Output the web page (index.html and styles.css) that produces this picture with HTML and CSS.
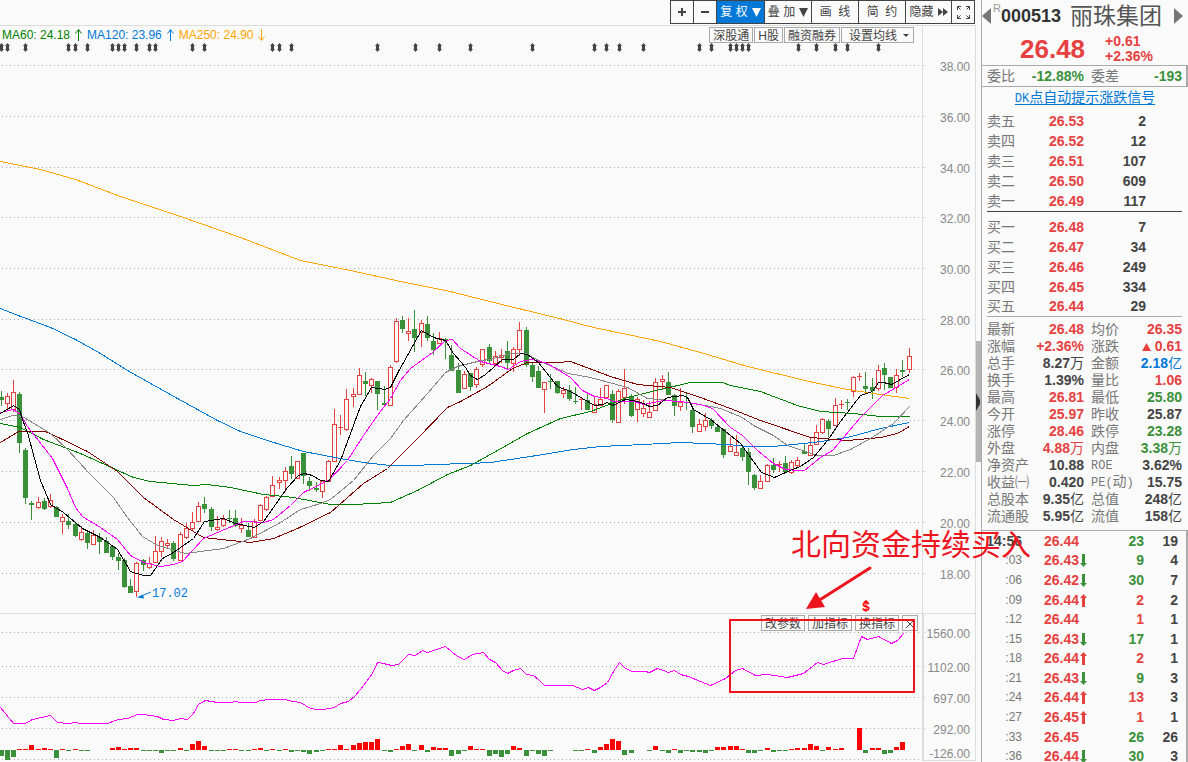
FILE: index.html
```html
<!DOCTYPE html>
<html lang="zh-CN">
<head>
<meta charset="utf-8">
<title>丽珠集团 000513</title>
<link rel="stylesheet" href="styles.css">
</head>
<body>
<main class="workspace">
  <nav class="toolbar">
    <button class="tool tool-sq" type="button" aria-label="放大"><svg width="8" height="8"><path d="M4 0v8M0 4h8" stroke="currentColor" stroke-width="2"/></svg></button>
    <button class="tool tool-sq" type="button" aria-label="缩小"><svg width="8" height="8"><path d="M0 4h8" stroke="currentColor" stroke-width="2"/></svg></button>
    <button class="tool tool-wide tool-active" type="button">复 权<svg width="9" height="9"><path d="M0 0h9l-4.500 9z" fill="currentColor"/></svg></button>
    <button class="tool" type="button">叠 加<svg width="9" height="9"><path d="M0 0h9l-4.500 9z" fill="currentColor"/></svg></button>
    <button class="tool" type="button">画&nbsp; 线</button>
    <button class="tool" type="button">简&nbsp; 约</button>
    <button class="tool tool-slim" type="button">隐藏<svg width="10" height="8"><path d="M0 0l5 4-5 4zM5 0l5 4-5 4z" fill="currentColor"/></svg></button>
    <button class="tool tool-sq" type="button" aria-label="全屏"><svg width="13" height="13" fill="none" stroke="currentColor"><path d="M.5 4V.5H4M.5.5l3 3M9 .5h3.500V4M12.500.5l-3 3M.5 9v3.500H4M.5 12.500l3-3M9 12.500h3.500V9M12.500 12.500l-3-3"/></svg></button>
  </nav>
  <section class="chart">
    <svg class="canvas" id="chart" viewBox="0 25 976 737" preserveAspectRatio="xMidYMin meet"></svg>
    <div class="legend">
      <span class="ma60">MA60: 24.18</span><svg class="ma60" width="7" height="12"><path d="M3.500 12V1M.5 4.500l3-4 3 4" fill="none" stroke="currentColor"/></svg>
      <span class="ma120">MA120: 23.96</span><svg class="ma120" width="7" height="12"><path d="M3.500 12V1M.5 4.500l3-4 3 4" fill="none" stroke="currentColor"/></svg>
      <span class="ma250">MA250: 24.90</span><svg class="ma250" width="7" height="12"><path d="M3.500 0v11M.5 7.500l3 4 3-4" fill="none" stroke="currentColor"/></svg>
    </div>
    <div class="tags">
      <button class="tag" type="button">深股通</button>
      <button class="tag" type="button">H股</button>
      <button class="tag" type="button">融资融券</button>
      <button class="tag tag-menu" type="button">设置均线<svg width="6" height="3"><path d="M0 0h6l-3 3z" fill="currentColor"/></svg></button>
    </div>
    <div class="indicators">
      <button class="tag" type="button">改参数</button>
      <button class="tag" type="button">加指标</button>
      <button class="tag" type="button">换指标</button>
      <button class="tag" type="button" aria-label="关闭"><svg width="8" height="8"><path d="M0 0l8 8M8 0l-8 8" stroke="currentColor"/></svg></button>
    </div>
    <svg class="canvas notes" viewBox="0 25 976 737" preserveAspectRatio="xMidYMin meet">
      <rect x="730" y="620" width="184" height="72" fill="none" stroke="#ed141e" stroke-width="2"/>
      <path d="M870 568L818 601" stroke="#ed141e" stroke-width="3" stroke-linecap="round"/>
      <path d="M806 609l10-17 9 15z" fill="#ed141e"/>
      <text class="note-text" x="791" y="555">北向资金持续买入</text>
    </svg>
  </section>
</main>
<div class="splitter"><span class="thumb"><svg width="4" height="18"><path d="M0 0v18l4-7V7z" fill="#333"/></svg></span></div>
<aside class="quote">
  <header class="head">
    <div class="title">
      <button class="step" type="button" aria-label="上一只"><svg width="9" height="16"><path d="M9 0v16L0 8z" fill="#777"/></svg></button>
      <span class="flag">R</span><strong class="code">000513</strong><h1 class="name">丽珠集团</h1>
      <button class="step next" type="button" aria-label="下一只"><svg width="9" height="16"><path d="M0 0v16l9-8z" fill="#777"/></svg></button>
    </div>
    <div class="last up"><strong class="price">26.48</strong><div class="delta"><span>+0.61</span><span>+2.36%</span></div></div>
  </header>
  <div class="ratio"><span>委比</span><b class="down">-12.88%</b><span class="second">委差</span><b class="down">-193</b></div>
  <p class="promo"><a href="#signal"><span class="latin">DK</span>点自动提示涨跌信号</a></p>
  <table class="book">
    <tbody>
    <tr><th>卖五</th><td class="up">26.53</td><td>2</td></tr>
    <tr><th>卖四</th><td class="up">26.52</td><td>12</td></tr>
    <tr><th>卖三</th><td class="up">26.51</td><td>107</td></tr>
    <tr><th>卖二</th><td class="up">26.50</td><td>609</td></tr>
    <tr><th>卖一</th><td class="up">26.49</td><td>117</td></tr>
    </tbody>
  </table>
  <table class="book bids">
    <tbody>
    <tr><th>买一</th><td class="up">26.48</td><td>7</td></tr>
    <tr><th>买二</th><td class="up">26.47</td><td>34</td></tr>
    <tr><th>买三</th><td class="up">26.46</td><td>249</td></tr>
    <tr><th>买四</th><td class="up">26.45</td><td>334</td></tr>
    <tr><th>买五</th><td class="up">26.44</td><td>29</td></tr>
    </tbody>
  </table>
  <table class="stats">
    <tbody>
    <tr><th>最新</th><td class="up">26.48</td><th>均价</th><td class="up">26.35</td></tr>
    <tr><th>涨幅</th><td class="up">+2.36%</td><th>涨跌</th><td class="up"><svg width="9" height="8"><path d="M0 8h9L4.500 0z" fill="currentColor"/></svg> 0.61</td></tr>
    <tr><th>总手</th><td>8.27<i>万</i></td><th>金额</th><td class="amount">2.18<i>亿</i></td></tr>
    <tr><th>换手</th><td>1.39%</td><th>量比</th><td class="up">1.06</td></tr>
    <tr><th>最高</th><td class="up">26.81</td><th>最低</th><td class="down">25.80</td></tr>
    <tr><th>今开</th><td class="up">25.97</td><th>昨收</th><td>25.87</td></tr>
    <tr><th>涨停</th><td class="up">28.46</td><th>跌停</th><td class="down">23.28</td></tr>
    <tr><th>外盘</th><td class="up">4.88<i>万</i></td><th>内盘</th><td class="down">3.38<i>万</i></td></tr>
    <tr><th>净资产</th><td>10.88</td><th><span class="latin">ROE</span></th><td>3.62%</td></tr>
    <tr><th>收益㈠</th><td>0.420</td><th><span class="latin">PE(</span>动<span class="latin">)</span></th><td>15.75</td></tr>
    <tr><th>总股本</th><td>9.35<i>亿</i></td><th>总值</th><td>248<i>亿</i></td></tr>
    <tr><th>流通股</th><td>5.95<i>亿</i></td><th>流值</th><td>158<i>亿</i></td></tr>
    </tbody>
  </table>
  <div class="ticks">
    <table>
      <tbody id="ticks"></tbody>
    </table>
  </div>
</aside>
<script src="chart.js"></script>
</body>
</html>
```
FILE: styles.css
```css
* { box-sizing: border-box; }
body {
  margin: 0;
  height: 100vh;
  display: flex;
  overflow: hidden;
  background: #fafafa;
  color: #444;
  font: 12px/16px "Liberation Sans", "Noto Sans CJK SC", sans-serif;
}
button { font: inherit; color: inherit; padding: 0; margin: 0; background: none; border: 0; }
svg { display: block; }
.up { color: #e64141; }
.down { color: #3a913a; }

.workspace { flex: 1; min-width: 0; display: flex; flex-direction: column; position: relative; z-index: 1; }
.toolbar { display: flex; justify-content: flex-end; height: 26px; padding: 0 1px 1px 0; border-bottom: 1px solid #ddd; }
.tool {
  width: 48px;
  height: 24px;
  margin-left: -1px;
  display: flex;
  align-items: center;
  justify-content: center;
  gap: 4px;
  border: 1px solid #444;
  white-space: nowrap;
}
.tool-sq { width: 24px; }
.tool-slim { width: 47px; }
.tool-wide { width: 49px; }
.tool-active { background: #0078d7; color: #fff; }

.chart { flex: 1; min-height: 0; margin-top: -1px; position: relative; }
.canvas { position: absolute; inset: 0; width: 100%; height: 100%; overflow: visible; }
.notes { pointer-events: none; }
.note-text { font: 30px "Noto Sans CJK SC", sans-serif; fill: #ed141e; }
.axis-text { font-size: 12px; fill: #888; text-anchor: end; }
.low-text { font: 12px "Liberation Mono", monospace; fill: #0078d7; }
.alert-text { font: bold 12px "Liberation Sans", sans-serif; fill: #f00; text-anchor: middle; }

.legend { position: absolute; left: 2px; top: 2px; display: flex; align-items: center; gap: 5px; }
.ma60 { color: #008000; }
.ma120 { color: #0078d7; }
.ma250 { color: #ffa500; }
.tags { position: absolute; right: 62px; top: 2px; display: flex; gap: 1px; }
.indicators { position: absolute; right: 58px; top: 590px; display: flex; gap: 3px; }
.tag { height: 16px; padding: 1px 3px 0; border: 1px solid #aaa; line-height: 14px; display: flex; align-items: center; }
.tags .tag-menu { padding: 1px 4px 0 7px; gap: 6px; }

.splitter { width: 5px; padding-top: 341px; }
.thumb { display: flex; align-items: center; height: 121px; background: #b4b4b4; }

.quote { width: 207px; height: 100vh; display: flex; flex-direction: column; border-left: 1px solid #aaa; overflow: hidden; font-size: 14px; }
.head { height: 66px; border-bottom: 1px solid #aaa; }
.title { display: flex; align-items: center; height: 32px; padding-right: 5px; }
.step { flex: none; }
.next { margin-left: auto; }
.flag { align-self: flex-start; margin: 0 0 0 2px; color: #999; font-size: 11px; }
.code { font-size: 18px; color: #333; margin-right: 9px; }
.name { margin: 0; font-size: 23px; font-weight: normal; color: #555; }
.last { display: flex; align-items: center; gap: 20px; padding-left: 38px; height: 33px; }
.price { font-size: 26px; }
.delta { display: flex; flex-direction: column; font-weight: bold; line-height: 15px; }
.ratio {
  display: grid;
  grid-template-columns: 35px 62px 39px 1fr;
  align-items: center;
  height: 21px;
  padding: 0 4px 0 5px;
  border-bottom: 1px solid #aaa;
  border-right: 2px solid #aaa;
  color: #777;
}
.ratio b { text-align: right; }
.second { padding-left: 7px; }
.promo { margin: 0; height: 24px; line-height: 20px; text-align: center; }
.promo a { color: #0078d7; text-underline-offset: 2px; }
.latin { font: 12px "Liberation Mono", monospace; }

table { border-collapse: collapse; table-layout: fixed; width: 100%; }
th, td { padding: 0; text-align: right; font-weight: bold; white-space: nowrap; }
th { text-align: left; font-weight: normal; color: #777; }
i { font-style: normal; font-weight: normal; }
.book { width: auto; margin: 0 6px 0 5px; border-bottom: 1px solid #444; }
.book th { width: 37px; }
.book td:nth-child(2) { width: 60px; }
.book td:nth-child(3) { padding-right: 36px; }
.book tr { height: 20px; }
.book.bids { margin-top: 5px; border-color: #aaa; }
.stats { width: auto; margin: 3px 6px 6px 5px; }
.stats tr { height: 17px; }
.stats th:first-child { width: 44px; }
.stats td:nth-child(2) { width: 53px; }
.stats th:nth-child(3) { width: 50px; padding-left: 7px; }
.stats svg { display: inline-block; }
.stats .amount { color: #0078d7; }
.ticks { flex: 1; min-height: 0; margin-bottom: -4px; border-top: 1px solid #aaa; border-right: 2px solid #aaa; }
.ticks table { height: 100%; }
.ticks th { width: 40px; text-align: right; font-size: 12px; }
.ticks tr:first-child th { font-size: 14px; font-weight: bold; color: #444; }
.ticks td:nth-child(2) { width: 68px; padding-left: 22px; text-align: left; }
.ticks td:nth-child(3) { width: 54px; }
.ticks td:nth-child(4) { padding-right: 8px; }
.ticks svg { display: inline-block; vertical-align: -2px; margin-left: 1px; }
```
FILE: chart.js
```js
const NS = "http://www.w3.org/2000/svg";
const chart = document.getElementById("chart");

function add(tag, attrs, text) {
  const el = document.createElementNS(NS, tag);
  for (const key in attrs) el.setAttribute(key, attrs[key]);
  if (text) el.textContent = text;
  chart.appendChild(el);
  return el;
}

const RED = "#e64141", GREEN = "#3a913a";
const xAt = i => Math.floor(1 + 6.178 * i);

// Price and indicator scales
const scale = [
  [65, "38.00"], [116, "36.00"], [167, "34.00"], [217, "32.00"], [268, "30.00"],
  [319, "28.00"], [369, "26.00"], [420, "24.00"], [471, "22.00"], [522, "20.00"], [573, "18.00"],
  [632, "1560.00"], [666, "1102.00"], [697, "697.00"], [728, "292.00"], [759, ""]
];
for (const [y, label] of scale) {
  add("path", { d: `M2 ${y + .5}H921`, stroke: "#aaa", "stroke-dasharray": "1 3", "shape-rendering": "crispEdges" });
  if (label) {
    add("path", { d: `M923 ${y + .5}h3`, stroke: "#ddd" });
    add("text", { x: 970, y: y + 6, class: "axis-text" }, label);
  }
}
add("text", { x: 970, y: 758, class: "axis-text" }, "-126.00");
add("path", { d: "M922.5 26V760.500H975.500V25M0 613.500H975M923.500 614V760", fill: "none", stroke: "#ddd", "shape-rendering": "crispEdges" });

// Event markers
const events = [1, 7, 25, 68, 75, 87, 112, 118, 124, 136, 149, 155, 192, 204, 272, 279, 291,
  377, 415, 439, 470, 532, 594, 606, 619, 643, 699, 711, 730, 736, 742, 748, 798, 816, 835, 847, 878];
for (const x of events) {
  add("path", { d: `M${x + .5} 43l2.500 3h-1v3h1l-2.500 3-2.500-3h1v-3h-1z`, fill: "#444" });
}

// [rising, high, body top, body bottom, low]
const candles = [
  [0,391,397,400,406],[1,393,396,403,409],[1,380,392,409,412],[0,392,394,443,453],[0,448,450,498,504],
  [0,501,503,505,520],[1,497,502,507,509],[0,498,501,509,510],[1,494,500,506,508],[0,506,507,517,517],
  [1,514,517,521,534],[0,514,521,525,529],[0,522,524,536,537],[1,526,532,539,541],[0,532,533,543,549],
  [1,530,535,544,544],[0,533,537,542,554],[0,537,541,553,553],[0,546,546,557,560],[0,553,557,561,570],
  [0,558,560,587,588],[0,579,586,593,593],[1,562,563,591,597],[0,559,560,565,571],[1,557,563,567,569],
  [1,536,551,562,562],[1,537,541,551,557],[1,539,543,545,548],[0,541,543,559,561],[1,532,534,560,560],
  [1,523,528,537,539],[1,512,522,528,530],[1,502,506,521,521],[0,497,504,509,513],[0,507,509,527,531],
  [1,516,527,529,531],[1,515,519,525,527],[0,510,518,519,523],[0,510,518,526,527],[1,518,525,528,533],
  [0,523,530,537,537],[1,519,521,537,537],[1,504,505,520,520],[1,496,497,509,511],[1,476,485,496,496],
  [1,477,480,482,489],[1,467,471,480,492],[0,456,466,474,479],[1,461,461,478,478],[0,453,453,476,484],
  [0,477,481,486,491],[0,482,488,490,492],[1,480,481,491,498],[1,460,461,481,481],[1,409,424,461,461],
  [1,415,427,428,435],[1,389,399,429,431],[1,388,394,396,407],[1,368,375,394,394],[0,372,381,384,396],
  [1,378,379,385,393],[0,381,381,394,410],[0,386,403,405,407],[1,365,367,405,405],[1,318,321,361,363],
  [0,316,320,329,333],[1,318,331,333,341],[0,310,329,338,352],[1,320,323,332,347],[0,316,324,338,341],
  [0,333,341,350,355],[1,332,338,343,343],[0,338,339,340,359],[0,345,355,371,371],[0,363,370,393,393],
  [1,371,374,388,388],[0,373,373,387,391],[1,367,369,384,388],[1,349,349,364,367],[0,344,347,361,363],
  [1,351,356,363,366],[1,349,355,357,363],[0,341,351,363,369],[1,347,349,363,372],[1,322,330,349,356],
  [0,327,330,365,367],[0,362,365,377,382],[0,366,371,388,388],[1,382,382,389,413],[0,374,381,382,389],
  [0,381,381,393,394],[1,387,390,393,398],[0,385,390,399,401],[0,387,401,402,404],[1,397,399,400,410],
  [0,393,400,410,410],[1,397,404,412,413],[1,388,399,405,405],[1,385,385,397,397],[0,390,394,420,423],
  [1,389,391,422,422],[1,369,388,397,404],[0,394,397,416,417],[1,397,399,409,422],[1,400,408,413,417],
  [1,401,412,417,417],[1,378,382,410,410],[1,375,379,381,389],[0,372,382,395,395],[0,394,395,406,416],
  [1,388,402,406,411],[0,393,402,403,410],[0,408,410,427,433],[1,419,424,431,431],[1,413,420,426,431],
  [0,418,420,426,429],[0,424,427,432,432],[0,429,429,455,458],[1,437,446,451,452],[1,435,452,455,455],
  [0,445,448,457,461],[0,448,452,472,485],[0,474,475,488,490],[1,475,481,488,488],[1,464,465,481,481],
  [0,458,465,470,473],[1,461,464,465,472],[0,456,463,472,472],[1,460,462,472,474],[1,457,460,465,467],
  [0,443,451,454,454],[1,437,445,455,455],[1,425,432,444,444],[1,418,419,432,434],[0,419,421,429,437],
  [1,398,405,425,425],[1,400,404,405,409],[0,399,402,403,410],[1,376,377,391,397],[1,373,376,377,381],
  [0,372,386,389,393],[0,378,387,391,399],[1,365,370,388,391],[0,363,368,375,390],[0,377,377,388,388],
  [1,369,375,387,393],[0,360,370,372,377],[1,348,356,369,373]
];
candles.forEach(([rising, high, top, bottom, low], i) => {
  const x = xAt(i), color = rising ? RED : GREEN, h = bottom - top;
  add("path", { d: `M${x + .5} ${high}V${top}M${x + .5} ${bottom}V${low}`, stroke: color, "shape-rendering": "crispEdges" });
  if (rising && h > 1) {
    add("rect", { x: x - 1.5, y: top + .5, width: 4, height: h, fill: "#fafafa", stroke: color, "shape-rendering": "crispEdges" });
  } else {
    add("rect", { x: x - 2, y: top, width: 5, height: h, fill: color, "shape-rendering": "crispEdges" });
  }
});

// Moving averages and the fund-flow curve
const lines = {
  "#ffa500": "0,161 40,169 75,179 120,196 180,216 240,237 300,260 350,270 400,281 450,291 485,300 563,319 593,327 627,334 660,341 700,352 717,357 747,366 780,374 813,382 847,389 880,394 909,398",
  "#0078d7": "0,308 15,314 50,327 75,339 100,353 127,370 177,398 217,420 240,431 270,441 303,451 340,458 363,462 390,465 417,465 430,464 470,463 490,462 530,456 573,449 600,446 643,444 680,442 727,444 747,446 773,446 813,442 847,437 880,428 909,422",
  "#008000": "0,423 20,427 43,439 80,453 133,477 150,481 193,485 207,484 230,487 263,494 293,497 330,504 353,504 390,502 417,490 447,474 470,465 497,450 527,433 560,418 590,411 627,397 660,389 690,382 722,382 730,385 760,391 797,405 820,411 853,413 880,416 909,416",
  "#800000": "0,442 18,431 45,431 60,438 87,451 117,471 143,497 173,519 203,537 230,540 250,542 273,538 297,528 330,512 363,483 387,468 417,438 447,407 460,401 487,386 512,368 527,362 557,362 570,361 610,376 637,384 670,387 700,397 730,408 760,420 810,437 847,440 880,437 897,433 909,426",
  "#888888": "0,419 12,415 22,416 50,433 67,449 88,472 113,497 127,517 142,536 157,545 185,553 223,548 250,538 280,522 300,509 320,503 330,499 353,480 373,455 390,438 403,420 427,393 445,372 457,366 477,361 493,358 510,353 525,353 540,361 568,373 590,377 627,387 647,398 680,401 705,405 720,408 742,417 753,425 773,435 787,445 817,455 833,455 850,449 870,438 893,423 909,406",
  "#ff00ff": "0,412 13,409 20,414 27,426 52,458 67,488 75,507 82,516 100,527 117,539 130,555 143,562 160,566 173,564 182,561 203,538 217,532 243,521 263,522 273,519 290,505 303,492 328,480 347,460 363,435 377,415 390,398 400,380 410,368 432,352 445,340 452,339 460,348 480,361 500,366 508,369 520,361 532,359 547,363 570,377 582,390 594,396 607,398 612,401 633,401 643,404 663,400 680,401 700,404 712,408 730,427 742,435 757,450 773,463 785,469 797,470 804,470 820,457 832,450 860,417 882,395 909,379",
  "#000000": "0,413 13,405 19,409 22,419 27,432 40,480 50,504 63,512 82,528 100,537 117,549 130,571 143,575 150,575 162,558 173,552 193,538 204,521 223,518 235,523 254,527 263,521 273,507 287,487 298,475 304,473 312,475 320,480 328,481 340,460 350,433 360,406 371,387 378,388 384,389 390,387 398,371 417,337 421,330 433,337 445,340 453,353 460,361 465,367 470,375 477,379 485,374 502,359 513,359 520,353 527,354 538,362 557,386 570,391 594,405 602,404 607,402 612,405 625,399 637,401 643,403 649,406 657,405 667,397 682,395 687,397 693,409 710,419 740,443 761,472 774,477 792,469 800,466 813,457 827,440 840,421 860,395 872,391 878,382 883,382 891,384 909,374"
};
function curve(points, color) {
  add("polyline", { points, fill: "none", stroke: color, transform: "translate(.5 .5)", "shape-rendering": "crispEdges" });
}
for (const color in lines) curve(lines[color], color);
curve("0,707 13,723 25,723 32,719 50,715 57,722 68,723 75,722 80,723 107,723 118,719 127,718 137,714 143,714 157,716 163,719 173,720 180,718 187,719 193,713 198,704 205,700 217,702 230,702 235,701 240,702 255,702 260,700 270,699 285,699 292,701 300,702 310,708 317,709 323,709 334,707 340,703 348,701 355,695 360,689 372,673 377,662 383,663 391,665 398,664 408,654 415,655 422,650 427,652 445,646 457,656 464,659 472,654 483,652 489,659 495,662 502,670 507,673 513,670 520,668 526,674 533,675 538,679 544,685 572,685 582,689 588,687 594,690 600,687 607,682 613,671 619,662 625,668 632,671 645,671 649,672 657,668 663,670 668,672 674,670 680,674 688,676 700,681 710,685 725,678 735,670 742,668 755,675 767,674 787,677 803,673 817,662 823,664 842,658 853,658 861,636 867,639 878,636 891,643 897,640 903,633", "#ff00ff");

// Daily net flow
const flows = [
  -6,-10,-7,1,1,5,1,2,1,-8,1,-1,1,-1,-1,0,0,0,2,3,1,2,2,-1,-1,-1,-3,-1,-1,2,-1,6,9,4,-1,-1,-1,1,1,-1,
  -1,1,2,-1,1,-1,1,-2,-1,-2,-4,-2,-1,1,1,5,1,5,7,8,8,11,-1,-2,1,4,6,-1,5,-2,3,2,2,-6,-4,-1,4,1,1,-6,
  -4,-7,-4,4,2,-6,-1,-4,-6,-1,0,0,0,-1,-1,1,-3,3,6,11,9,-5,-3,0,0,-1,4,-1,-3,1,-3,-1,-2,-2,-3,-1,3,3,4,4,
  1,-3,-3,-1,2,-2,-1,-1,1,2,2,6,4,-1,3,1,2,0,0,22,-3,2,2,-4,-3,3,8
];
flows.forEach((v, i) => {
  if (v) add("rect", { x: xAt(i) - 2, y: v > 0 ? 750 - v : 750, width: 5, height: Math.abs(v), fill: v > 0 ? "#f00" : GREEN });
});

// Low point callout and alert mark
add("path", { d: "M151 592l-12 5", stroke: "#0078d7" });
add("path", { d: "M137 597.500l6-3 1 4z", fill: "#0078d7" });
add("text", { x: 152, y: 597, class: "low-text" }, "17.02");
add("text", { x: 866, y: 611, class: "alert-text" }, "S");
add("path", { d: "M863 602.500l3-2.500 3 2.500zM865.500 602h1v10h-1z", fill: "#f00" });

// Time and sales: [time, price, direction, volume, buy side, trades]
const ticks = [
  ["14:56", "26.44", 0, 23, 0, 19], [":03", "26.43", -1, 9, 0, 4], [":06", "26.42", -1, 30, 0, 7],
  [":09", "26.44", 1, 2, 1, 2], [":12", "26.44", 0, 1, 1, 1], [":15", "26.43", -1, 17, 0, 1],
  [":18", "26.44", 1, 2, 1, 1], [":21", "26.43", -1, 9, 0, 3], [":24", "26.44", 1, 13, 1, 3],
  [":27", "26.45", 1, 1, 1, 1], [":33", "26.45", 0, 26, 0, 26], [":36", "26.44", -1, 30, 0, 3]
];
const arrows = {
  "1": `<svg width="7" height="13"><path d="M3.500 0L7 4H5v9H2V4H0z" fill="${RED}"/></svg>`,
  "0": "",
  "-1": `<svg width="7" height="13"><path d="M3.500 13L7 9H5V0H2v9H0z" fill="${GREEN}"/></svg>`
};
document.getElementById("ticks").innerHTML = ticks.map(([time, price, dir, vol, buy, count]) =>
  `<tr><th>${time}</th><td class="up">${price}${arrows[dir]}</td><td class="${buy ? "up" : "down"}">${vol}</td><td>${count}</td></tr>`
).join("");
```
